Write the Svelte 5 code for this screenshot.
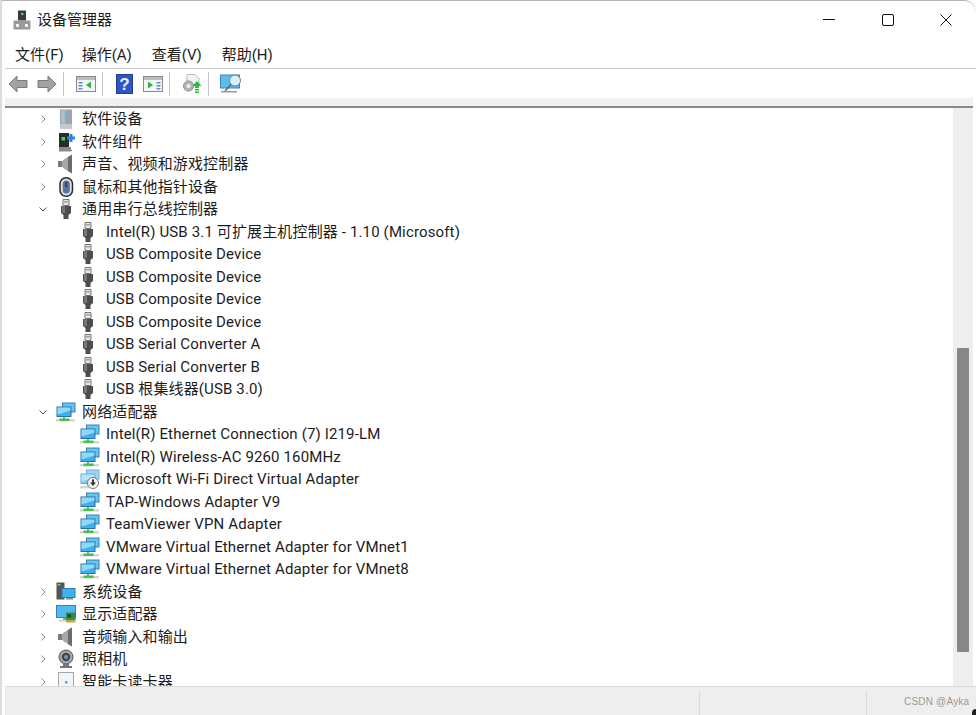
<script>
    const menus = ['文件(F)', '操作(A)', '查看(V)', '帮助(H)'];

    // tree rows, top to bottom; the list is cut off by the status bar
    const rows = [
        { label: '软件设备', icon: 'softdev' },
        { label: '软件组件', icon: 'softcomp' },
        { label: '声音、视频和游戏控制器', icon: 'speaker' },
        { label: '鼠标和其他指针设备', icon: 'mouse' },
        { label: '通用串行总线控制器', icon: 'usb', open: true },
        { label: 'Intel(R) USB 3.1 可扩展主机控制器 - 1.10 (Microsoft)', icon: 'usb', child: true },
        { label: 'USB Composite Device', icon: 'usb', child: true },
        { label: 'USB Composite Device', icon: 'usb', child: true },
        { label: 'USB Composite Device', icon: 'usb', child: true },
        { label: 'USB Composite Device', icon: 'usb', child: true },
        { label: 'USB Serial Converter A', icon: 'usb', child: true },
        { label: 'USB Serial Converter B', icon: 'usb', child: true },
        { label: 'USB 根集线器(USB 3.0)', icon: 'usb', child: true },
        { label: '网络适配器', icon: 'net', open: true },
        { label: 'Intel(R) Ethernet Connection (7) I219-LM', icon: 'net', child: true },
        { label: 'Intel(R) Wireless-AC 9260 160MHz', icon: 'net', child: true },
        { label: 'Microsoft Wi-Fi Direct Virtual Adapter', icon: 'netoff', child: true },
        { label: 'TAP-Windows Adapter V9', icon: 'net', child: true },
        { label: 'TeamViewer VPN Adapter', icon: 'net', child: true },
        { label: 'VMware Virtual Ethernet Adapter for VMnet1', icon: 'net', child: true },
        { label: 'VMware Virtual Ethernet Adapter for VMnet8', icon: 'net', child: true },
        { label: '系统设备', icon: 'system' },
        { label: '显示适配器', icon: 'display' },
        { label: '音频输入和输出', icon: 'speaker' },
        { label: '照相机', icon: 'camera' },
        { label: '智能卡读卡器', icon: 'card' }
    ];
</script>

{#snippet netShape()}
    <rect x="6" y="0.5" width="13.5" height="10" fill="#3f7fb5" />
    <rect x="7" y="1.5" width="11.5" height="8" fill="#63c6f0" />
    <rect x="0.500" y="4.500" width="15" height="10.500" fill="#2f6fa8" />
    <rect x="1.500" y="5.500" width="13" height="8.500" fill="#3eb0ec" />
    <path d="M1.500 5.500h13v3l-13 4z" fill="#8fd8f6" />
    <rect x="7" y="15" width="2" height="2" fill="#9a9a9a" />
{/snippet}

{#snippet icon(name)}
    <svg class="ico" viewBox="0 0 20 20" aria-hidden="true">
        {#if name === 'usb'}
            <path d="M7 0.500h6v6H7z" fill="#e4e4e4" stroke="#777" />
            <path d="M8.500 2h1v1.500h-1zM10.500 2h1v1.500h-1z" fill="#666" />
            <path d="M5 7h10v7l-2.500 2v4h-5v-4L5 14z" fill="#4d4d4d" />
            <path d="M6 7h3v7H6z" fill="#767676" />
        {:else if name === 'net'}
            {@render netShape()}
            <rect x="0" y="17" width="19" height="2.500" fill="#d5d5d5" />
            <rect x="3.500" y="16.500" width="10" height="2.500" fill="#45c24a" />
        {:else if name === 'netoff'}
            <g opacity="0.65">{@render netShape()}</g>
            <rect x="0" y="17" width="9" height="2.500" fill="#d5d5d5" />
            <circle cx="13" cy="14" r="5.500" fill="#f4f4f4" stroke="#777" />
            <path d="M12 10.500h2v3h2L13 17l-3-3.500h2z" fill="#333" />
        {:else if name === 'softdev'}
            <rect x="4" y="0.500" width="12" height="19" fill="#9aa5ad" />
            <rect x="4" y="15" width="12" height="4.500" fill="#c4c8cb" />
            <rect x="5" y="1.500" width="4" height="13" fill="#b6bec4" />
            <circle cx="10" cy="7" r="1.800" fill="#3fd3e6" />
        {:else if name === 'softcomp'}
            <path d="M3 1h10v14l3 4H3z" fill="#2b2b2b" />
            <rect x="3" y="15" width="12" height="4.500" fill="#8b8b8b" />
            <rect x="5.500" y="5" width="3.500" height="3.500" fill="#42d84a" />
            <path d="M11 4.500h2.500V2h3v2.500H19v3h-2.500V10h-3V7.500H11z" fill="#2a86dc" />
        {:else if name === 'speaker'}
            <path d="M2 7h5V6l9-5.500v19L7 14v-1H2z" fill="#a8a8a8" />
            <path d="M12 3l4-2.500v19L12 17z" fill="#6c6c6c" />
            <path d="M2 7h4v6H2z" fill="#7c7c7c" />
        {:else if name === 'mouse'}
            <rect x="4" y="0.800" width="12.500" height="18.400" rx="6" fill="#d7dde2" stroke="#2c2c2c" stroke-width="1.500" />
            <rect x="6.800" y="3.500" width="7" height="13" rx="3.500" fill="#55769a" />
            <rect x="9.300" y="5" width="2" height="5" fill="#2f4760" />
        {:else if name === 'system'}
            <rect x="0.500" y="0.500" width="8" height="17" fill="#555" />
            <rect x="1.500" y="2" width="3" height="1.500" fill="#6bd16b" />
            <rect x="5.500" y="6" width="14" height="10" fill="#2f7fb8" />
            <rect x="6.500" y="7" width="12" height="8" fill="#3bb4ea" />
            <rect x="10" y="16" width="7" height="1.500" fill="#888" />
        {:else if name === 'display'}
            <rect x="0" y="1" width="20" height="13" fill="#3a7fb0" />
            <rect x="1" y="2" width="18" height="11" fill="#4fbaf0" />
            <rect x="7" y="14" width="4" height="2.500" fill="#999" />
            <rect x="3" y="16" width="12" height="1.500" fill="#ccc" />
            <rect x="10" y="8.500" width="9.500" height="8" fill="#2f8f4a" />
            <rect x="11.500" y="10" width="3.500" height="3.500" fill="#1d4f2c" />
            <rect x="10" y="16.500" width="9.500" height="2" fill="#d8a02e" />
        {:else if name === 'camera'}
            <circle cx="10" cy="8" r="7" fill="#a8a8a8" stroke="#555" />
            <circle cx="10" cy="8" r="4.200" fill="#3b4752" />
            <circle cx="10" cy="8" r="2" fill="#7d96ab" />
            <path d="M7 15h6v2h3v2H4v-2h3z" fill="#777" />
        {:else if name === 'card'}
            <rect x="2.500" y="0.500" width="15" height="19" fill="#f2f4f6" stroke="#a4a8ac" />
            <rect x="9" y="9" width="2.500" height="2.500" fill="#39b6e8" />
        {/if}
    </svg>
{/snippet}

<div class="window">
    <header class="titlebar">
        <svg class="appicon" viewBox="0 0 18 20" aria-hidden="true">
            <rect x="5" y="0.500" width="8" height="10" fill="#3a3a3a" />
            <rect x="8" y="3" width="2.500" height="2" fill="#4cd45a" />
            <rect x="0.500" y="10.500" width="17" height="9" rx="1" fill="#9a9a9a" />
            <rect x="3" y="14" width="3" height="3" fill="#f2f2f2" />
            <rect x="12" y="14" width="3" height="3" fill="#f2f2f2" />
        </svg>
        <span class="title">设备管理器</span>
        <div class="winbtns">
            <svg viewBox="0 0 12 12" aria-hidden="true"><path d="M0 5.500h12" stroke="#111" /></svg>
            <svg viewBox="0 0 12 12" aria-hidden="true"><rect x="0.500" y="0.500" width="11" height="11" rx="1.500" fill="none" stroke="#111" /></svg>
            <svg viewBox="0 0 12 12" aria-hidden="true"><path d="M0.500 0.500l11 11M11.500 0.500l-11 11" stroke="#111" /></svg>
        </div>
    </header>

    <nav class="menubar">
        {#each menus as m}
            <span>{m}</span>
        {/each}
    </nav>

    <div class="toolbar">
        <svg class="tb arrow" viewBox="0 0 20 18" aria-hidden="true"><path d="M1 9l8-8v4.500h10v7H9V17z" fill="#a2a2a2" stroke="#7a7a7a" /></svg>
        <svg class="tb arrow a2" viewBox="0 0 20 18" aria-hidden="true"><path d="M19 9l-8-8v4.500H1v7h10V17z" fill="#a2a2a2" stroke="#7a7a7a" /></svg>
        <i class="sep s1"></i>
        <svg class="tb win" viewBox="0 0 20 16" aria-hidden="true">
            <rect x="0.500" y="0.500" width="19" height="15" fill="#f4f6f8" stroke="#8a8a8a" />
            <rect x="1" y="1" width="18" height="3" fill="#b9bec3" />
            <rect x="2.500" y="6" width="4" height="1.500" fill="#5c8fc4" />
            <rect x="2.500" y="9" width="4" height="1.500" fill="#5c8fc4" />
            <rect x="2.500" y="12" width="4" height="1.500" fill="#5c8fc4" />
            <path d="M15 5.500v7l-5-3.500z" fill="#2fb344" />
        </svg>
        <i class="sep s2"></i>
        <svg class="tb help" viewBox="0 0 17 20" aria-hidden="true">
            <rect x="0.500" y="0.500" width="16" height="19" fill="#2d55c4" stroke="#23408f" />
            <text x="8.500" y="15.500" text-anchor="middle" class="q">?</text>
        </svg>
        <svg class="tb win w2" viewBox="0 0 20 16" aria-hidden="true">
            <rect x="0.500" y="0.500" width="19" height="15" fill="#f4f6f8" stroke="#8a8a8a" />
            <rect x="1" y="1" width="18" height="3" fill="#b9bec3" />
            <path d="M5 5.500v7l5-3.500z" fill="#2fb344" />
            <rect x="13.500" y="6" width="4" height="1.500" fill="#5c8fc4" />
            <rect x="13.500" y="9" width="4" height="1.500" fill="#5c8fc4" />
            <rect x="13.500" y="12" width="4" height="1.500" fill="#5c8fc4" />
        </svg>
        <i class="sep s3"></i>
        <svg class="tb gear" viewBox="0 0 20 20" aria-hidden="true">
            <path d="M5 0.500h8l4 4V11H5z" fill="#f2f2f2" stroke="#bbb" />
            <circle cx="6.500" cy="12" r="5" fill="#b4b4b4" stroke="#8a8a8a" />
            <circle cx="6.500" cy="12" r="2" fill="#eee" />
            <path d="M15 7l4.500 5H17v2h-4v-2h-2.500z" fill="#22c23c" />
            <rect x="13" y="15" width="4" height="1.500" fill="#22c23c" />
            <rect x="13" y="17.500" width="4" height="1.500" fill="#22c23c" />
        </svg>
        <i class="sep s4"></i>
        <svg class="tb scan" viewBox="0 0 22 20" aria-hidden="true">
            <rect x="0.500" y="1" width="19" height="13" fill="#5cbcea" stroke="#3b86b8" />
            <circle cx="15" cy="6.500" r="5.500" fill="#d8eff9" stroke="#6d7f8c" />
            <path d="M11 10.500L5 17" stroke="#666" stroke-width="1.500" />
            <rect x="1" y="17" width="16" height="1.500" fill="#9a9a9a" />
        </svg>
    </div>

    <div class="strip"></div>

    <main class="content">
        <div class="tree">
            {#each rows as r}
                <div class="row" class:child={r.child} class:netrow={r.child && r.icon.startsWith('net')}>
                    {#if !r.child}
                        <svg class="chev" viewBox="0 0 10 10" aria-hidden="true">
                            {#if r.open}
                                <path d="M1.500 3.500L5 7l3.500-3.500" fill="none" stroke="#555" />
                            {:else}
                                <path d="M3.500 1.500L7 5 3.500 8.500" fill="none" stroke="#8a8a8a" />
                            {/if}
                        </svg>
                    {/if}
                    {@render icon(r.icon)}
                    <span class="label">{r.label}</span>
                </div>
            {/each}
        </div>
        <div class="scrolltrack"><div class="thumb"></div></div>
    </main>

    <footer class="status">
        <div class="cell wide"></div>
        <div class="cell mid"></div>
        <div class="cell last">CSDN @Ayka</div>
    </footer>
    <i class="corner"></i>
</div>

<style>
    :global(body) {
        margin: 0;
        background: #fff;
    }

    .window {
        box-sizing: border-box;
        width: 976px;
        height: 715px;
        padding-left: 3px;
        display: flex;
        flex-direction: column;
        overflow: hidden;
        position: relative;
        background: #fff;
        border-top: 1px solid #b4b4b4;
        border-left: 2px solid #dcdcdc;
        border-top-right-radius: 12px;
        font-family: Roboto, "Noto Sans CJK SC", sans-serif;
        font-size: 15px;
        color: #1c1c1c;
    }

    .titlebar {
        height: 38px;
        flex: none;
        display: flex;
        align-items: center;
        padding-left: 8px;
    }

    .appicon {
        width: 18px;
        height: 20px;
        margin-right: 6px;
    }

    .title {
        font-size: 15px;
        line-height: 18px;
    }

    .winbtns {
        margin-left: auto;
        margin-right: 24px;
        display: flex;
        gap: 46.5px;
    }

    .winbtns svg {
        width: 12px;
        height: 12px;
    }

    .menubar {
        height: 29px;
        flex: none;
        display: flex;
        align-items: center;
        padding-left: 10px;
        border-bottom: 1px solid #c8c8c8;
        gap: 20px;
    }

    .menubar span {
        white-space: nowrap;
    }

    .menubar span:first-child {
        margin-right: -2px;
    }

    .toolbar {
        height: 29px;
        flex: none;
        display: flex;
        align-items: center;
        background: #fff;
    }

    .tb {
        flex: none;
        display: block;
    }

    .arrow {
        width: 20px;
        height: 18px;
        margin-left: 3px;
    }

    .a2 {
        margin-left: 9px;
    }

    .sep {
        flex: none;
        width: 1px;
        height: 24px;
        background: #c8c8c8;
    }

    .s1 {
        margin-left: 6px;
    }

    .win {
        width: 20px;
        height: 16px;
        margin-left: 12px;
    }

    .s2 {
        margin-left: 6px;
    }

    .help {
        width: 17px;
        height: 20px;
        margin-left: 13px;
    }

    .w2 {
        margin-left: 10px;
    }

    .s3 {
        margin-left: 6px;
    }

    .gear {
        width: 20px;
        height: 20px;
        margin-left: 12px;
    }

    .s4 {
        margin-left: 6px;
    }

    .scan {
        width: 22px;
        height: 20px;
        margin-left: 11px;
    }

    .q {
        font-family: "Liberation Sans", sans-serif;
        font-size: 17px;
        font-weight: 700;
        fill: #e8eeff;
    }

    .strip {
        height: 8px;
        flex: none;
        background: #f0f0f0;
        border-bottom: 2px solid #8a8a8a;
        margin-right: 3px;
    }

    .content {
        flex: 1;
        min-height: 0;
        display: flex;
        margin-right: 3px;
    }

    .tree {
        flex: 1;
        min-width: 0;
        overflow: hidden;
    }

    .row {
        height: 22.5px;
        display: flex;
        align-items: center;
        padding-left: 33px;
        white-space: nowrap;
    }

    .row.child {
        padding-left: 74px;
    }

    .chev {
        width: 10px;
        height: 10px;
        flex: none;
        margin-right: 9px;
    }

    .ico {
        width: 20px;
        height: 20px;
        flex: none;
        margin-right: 6px;
        margin-left: -1px;
    }

    .row.child .ico {
        margin-right: 8px;
    }

    .row.netrow .ico {
        margin-left: 1px;
        margin-right: 6px;
    }

    .label {
        line-height: 20px;
        letter-spacing: 0.14px;
    }

    .scrolltrack {
        width: 20px;
        flex: none;
        background: #eeeeee;
        padding: 240px 4px 0;
        box-sizing: border-box;
    }

    .thumb {
        height: 304px;
        background: #888;
    }

    .status {
        height: 29px;
        flex: none;
        display: flex;
        background: #eeeeee;
        border-top: 1px solid #dadada;
        box-sizing: border-box;
        padding-top: 4px;
    }

    .cell {
        border-right: 1px solid #dcdcdc;
        box-sizing: border-box;
    }

    .wide {
        width: 695px;
    }

    .mid {
        width: 167px;
    }

    .last {
        flex: 1;
        border-right: 0;
        padding: 5px 0 0 37px;
        font-family: "Liberation Sans", sans-serif;
        font-size: 10px;
        color: #9a9a9a;
        letter-spacing: 0.2px;
    }

    .corner {
        position: absolute;
        right: 0;
        bottom: 0;
        width: 4px;
        height: 6px;
        background: #222;
        border-top-left-radius: 4px;
    }
</style>
